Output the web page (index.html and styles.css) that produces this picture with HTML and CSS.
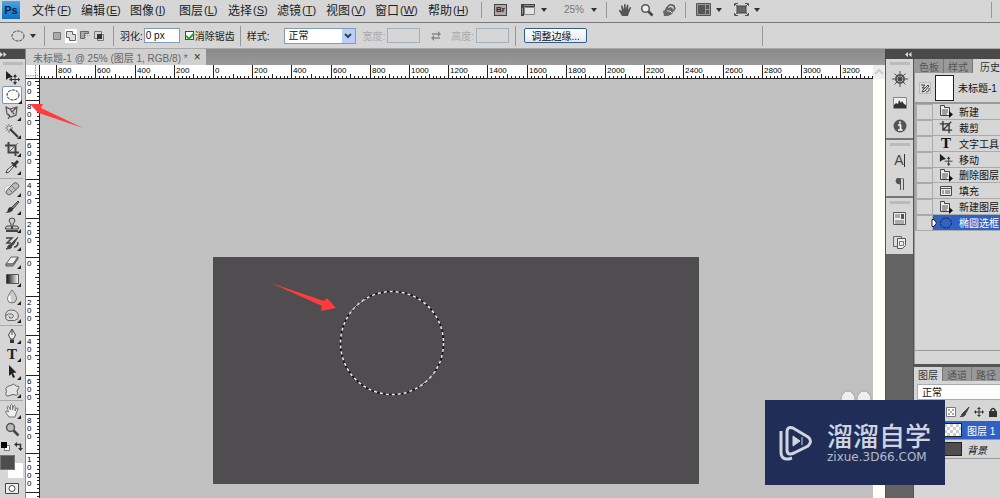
FILE: index.html
```html
<!DOCTYPE html>
<html lang="zh-CN">
<head>
<meta charset="utf-8">
<title>未标题-1 @ 25%</title>
<link rel="stylesheet" href="styles.css">
</head>
<body>
<div class="app">
  <header class="menubar">
    <span class="logo">Ps</span>
    <nav class="menus">
      <button>文件<i>(<u>F</u>)</i></button><button>编辑<i>(<u>E</u>)</i></button><button>图像<i>(<u>I</u>)</i></button><button>图层<i>(<u>L</u>)</i></button><button>选择<i>(<u>S</u>)</i></button><button>滤镜<i>(<u>T</u>)</i></button><button>视图<i>(<u>V</u>)</i></button><button class="wide">窗口<i>(<u>W</u>)</i></button><button class="wide">帮助<i>(<u>H</u>)</i></button>
    </nav>
    <span class="bar-sep"></span>
    <div class="apptools">
      <button class="bridge" aria-label="Bridge">Br</button>
      <button class="drop" aria-label="查看额外内容"><svg width="16" height="13" viewBox="0 0 16 13"><path d="M1 1h14v3H4v9H1z" fill="#444"/><path d="M4.500 4.500h10v7h-10z" fill="#e4e4e4" stroke="#888"/><path d="M2 6h1M2 8h1M2 10h1M5 2v1M7 2v1M9 2v1M11 2v1M13 2v1" stroke="#ddd"/></svg><b class="tri"></b></button>
      <button class="drop zoomlevel">25%<b class="tri"></b></button>
    </div>
    <span class="bar-sep"></span>
    <div class="viewtools">
      <button aria-label="抓手"><svg width="14" height="14" viewBox="0 0 14 14"><path d="M4 13 1 8q0-2 2-.5l1 1L3 3q.8-1.500 1.600 0L6 6.500V1.500q.8-1.500 1.600 0V6L9 2q1-1 1.500.3L10 7l2-3q1.500-.3 1 1l-2.500 6-.5 2z" fill="#555"/></svg></button>
      <button aria-label="缩放"><svg width="14" height="14" viewBox="0 0 14 14"><circle cx="5.500" cy="5.500" r="3.800" fill="#eee" stroke="#555" stroke-width="1.500"/><path d="m8.500 8.500 4 4" stroke="#444" stroke-width="2.500"/></svg></button>
      <button aria-label="旋转视图"><svg width="15" height="14" viewBox="0 0 15 14"><path d="M2 13 1 8l2-1 1-3 2 1 3-1 3 3-2 4-4 2z" fill="#666"/><path d="M5 5q2-5 7-2l1 3" fill="none" stroke="#555" stroke-width="1.500"/><path d="m10 6 4-1-2 4z" fill="#777"/><path d="M5 8h3l2 2" stroke="#ddd" fill="none"/></svg></button>
    </div>
    <span class="bar-sep"></span>
    <div class="arrange">
      <button class="drop" aria-label="排列文档"><svg width="15" height="13" viewBox="0 0 15 13"><path d="M.500.500h14v12H.500z" fill="#999" stroke="#555"/><path d="M2 2h7v9H2z" fill="#555"/><path d="M10 2h3v4h-3zM10 7h3v4h-3z" fill="#555"/></svg><b class="tri"></b></button>
      <button class="drop" aria-label="屏幕模式"><svg width="15" height="13" viewBox="0 0 15 13"><path d="M3 3h9v7H3z" fill="#666" stroke="#444"/><path d="M.500 3V.500H4M11 .500h3.500V3M.500 10v2.500H4M11 12.500h3.500V10M1 1l2 2M14 1l-2 2M1 12l2-2M14 12l-2-2" fill="none" stroke="#555"/></svg><b class="tri"></b></button>
    </div>
    <span class="bar-sep last"></span>
  </header>

  <section class="options">
    <button class="drop current" aria-label="椭圆选框工具"><svg width="14" height="12" viewBox="0 0 14 12"><ellipse cx="7" cy="6" rx="6" ry="5" fill="none" stroke="#444" stroke-dasharray="3 1"/></svg><b class="tri"></b></button>
    <span class="opt-sep"></span>
    <div class="modes">
      <button aria-label="新选区"><svg width="12" height="12" viewBox="0 0 12 12"><path d="M2.500 2.500h7v7h-7z" fill="#aaa" stroke="#777"/></svg></button>
      <button class="on" aria-label="添加到选区"><svg width="12" height="12" viewBox="0 0 12 12"><path d="M1.500 1.500h6v3h3v6h-6v-3h-3z" fill="#ddd" stroke="#666"/></svg></button>
      <button aria-label="从选区减去"><svg width="12" height="12" viewBox="0 0 12 12"><path d="M1.500 1.500h8v2h-4v5h-4z" fill="#aaa" stroke="#666"/><path d="M6 5.500h5M6.500 5v6" stroke="#aaa" stroke-dasharray="1 1"/></svg></button>
      <button aria-label="与选区交叉"><svg width="12" height="12" viewBox="0 0 12 12"><path d="M1.500 1.500h7v7h-7zM4.500 4.500h6v6h-6z" fill="none" stroke="#777"/><path d="M4 4h5v5H4z" fill="#333"/></svg></button>
    </div>
    <span class="opt-sep"></span>
    <label class="feather">羽化:<input type="text" value="0 px"></label>
    <label class="anti"><input type="checkbox" checked><span>消除锯齿</span></label>
    <span class="opt-sep"></span>
    <label class="style">样式:<select><option>正常</option></select></label>
    <label class="dim off">宽度:<input type="text" disabled></label>
    <svg class="swap" width="10" height="10" viewBox="0 0 10 10"><path d="M1 3h7M9 7H2" stroke="#888" stroke-width="1.500"/><path d="m7 0 3 3-3 3zM3 4 0 7l3 3z" fill="#888"/></svg>
    <label class="dim off">高度:<input type="text" disabled></label>
    <span class="opt-sep"></span>
    <button class="refine">调整边缘...</button>
    <span class="opt-sep end"></span>
  </section>

  <main class="work">
    <aside class="toolbox">
      <div class="dark-head"><svg width="7" height="5" viewBox="0 0 7 5"><path d="m0 0 3 2.500L0 5zM3.500 0l3 2.500-3 2.500z" fill="#ddd"/></svg></div>
      <div class="grip"></div>
      <button class="tool solo" aria-label="移动"><svg width="16" height="16" viewBox="0 0 16 16"><path d="M2 2v9l2.500-2L9 8z" fill="#222"/><path d="M11 6v9M6.500 10.500h9" stroke="#333"/><path d="m9 8 2-3 2 3zM9 13l2 3 2-3zM8 8.500v4l-3-2zM14 8.500v4l2-2z" fill="#333"/></svg></button>
      <button class="tool active" aria-label="椭圆选框"><svg width="16" height="16" viewBox="0 0 16 16"><ellipse cx="8" cy="8" rx="6" ry="5" fill="none" stroke="#222" stroke-dasharray="3 1"/></svg></button>
      <button class="tool" aria-label="套索"><svg width="16" height="16" viewBox="0 0 16 16"><path d="m2 2 4 2 7-2-1 8-5 2-4-3zM6 4l2 3 4-4M4 9q3 1 0 5" fill="none" stroke="#555" stroke-width="1.200"/><path d="m8 6 3 3-2 .5z" fill="#555"/></svg></button>
      <button class="tool" aria-label="魔棒"><svg width="16" height="16" viewBox="0 0 16 16"><path d="m6 6 8 8" stroke="#333" stroke-width="2"/><path d="M5 1v3M5 7v3M1 5h3M7 5h2M2 2l2 2M8 2 6 4M2 8l2-2" stroke="#777"/></svg></button>
      <button class="tool" aria-label="裁剪"><svg width="16" height="16" viewBox="0 0 16 16"><path d="M1 4.500h10.500V15M4.500 1v10.500H15" fill="none" stroke="#444" stroke-width="2"/><path d="m5 11 9-9" stroke="#666"/></svg></button>
      <button class="tool" aria-label="吸管"><svg width="16" height="16" viewBox="0 0 16 16"><path d="m2 14 1-3 6-5 1 1-5 6z" fill="#eee" stroke="#444"/><path d="m7 4 5 5 1-1-1-2 3-3-2-2-3 3-2-1z" fill="#333"/></svg></button>
      <hr>
      <button class="tool" aria-label="修复画笔"><svg width="16" height="16" viewBox="0 0 16 16"><circle cx="5" cy="9" r="4.500" fill="#eee" stroke="#aaa" stroke-dasharray="1 1"/><path d="M3 13q-2-2 0-4l7-7q2-1 4 1t0 4l-7 6q-2 2-4 0z" fill="#bbb" stroke="#666"/><path d="m5 8 4 4M8 5l4 4" stroke="#777"/></svg></button>
      <button class="tool" aria-label="画笔"><svg width="16" height="16" viewBox="0 0 16 16"><path d="m14 2-7 7 2 1 6-7z" fill="#888" stroke="#444"/><path d="M7 8q2 1 2 3-2 3-8 3 3-1 3-4 1-2 3-2z" fill="#333"/></svg></button>
      <button class="tool" aria-label="仿制图章"><svg width="16" height="16" viewBox="0 0 16 16"><path d="M8 1q3 0 3 3L9 7v2h4q1.500 0 1.500 3h-13Q1.500 9 3 9h4V7L5 4q0-3 3-3z" fill="#ccc" stroke="#444"/><path d="M2 14h12M8 9v3" stroke="#444" stroke-width="2"/></svg></button>
      <button class="tool" aria-label="历史画笔"><svg width="16" height="16" viewBox="0 0 16 16"><path d="m14 2-7 7 2 1zM7 9q2 1 0 4-2 1-5 1 2-1 2-3z" fill="#444" stroke="#444"/><path d="M2 3h6L3 8h4M10 12q4 0 4-5" fill="none" stroke="#444" stroke-width="1.500"/></svg></button>
      <button class="tool" aria-label="橡皮擦"><svg width="16" height="16" viewBox="0 0 16 16"><path d="m2 11 5-7h7l-5 7z" fill="#eee" stroke="#666"/><path d="M2 11v2h7l5-7V4l-5 7z" fill="#aaa" stroke="#555"/></svg></button>
      <button class="tool" aria-label="渐变"><svg width="16" height="16" viewBox="0 0 16 16"><defs><linearGradient id="g"><stop stop-color="#111"/><stop offset="1" stop-color="#fff"/></linearGradient></defs><path d="M2.500 3.500h12v9h-12z" fill="url(#g)" stroke="#555"/></svg></button>
      <button class="tool" aria-label="模糊"><svg width="16" height="16" viewBox="0 0 16 16"><path d="M8 1q5 6 4.500 9-.5 4-4.500 4T3.500 10Q3.500 7 8 1z" fill="#ccc" stroke="#777"/><path d="M6 7q-2 4 1 5" stroke="#fff" stroke-width="2" fill="none"/></svg></button>
      <button class="tool" aria-label="海绵"><svg width="16" height="16" viewBox="0 0 16 16"><path d="M1.500 9q0-6 6-6t7 6q0 4-4 4.500H4Q1.500 13 1.500 9z" fill="#ddd" stroke="#666"/><path d="M1.500 9Q4 6 8 7q3 2 0 4-3 1-3-2" fill="none" stroke="#666"/></svg></button>
      <hr class="thin">
      <button class="tool" aria-label="钢笔"><svg width="16" height="16" viewBox="0 0 16 16"><path d="m8 1 3.500 6L9.500 11h-3L4.500 7z" fill="#eee" stroke="#444"/><path d="M8 2v5" stroke="#444"/><path d="M6 11.500h4V15H6z" fill="#333"/></svg></button>
      <button class="tool type" aria-label="文字">T</button>
      <button class="tool" aria-label="路径选择"><svg width="16" height="16" viewBox="0 0 16 16"><path d="M5 1v11l2.500-2 1.500 4 2-1-2-4 3.500-.5z" fill="#222"/></svg></button>
      <button class="tool" aria-label="自定形状"><svg width="16" height="16" viewBox="0 0 16 16"><path d="M8 3q2-2 3 0t3 1q2 1 0 3t0 5q-1 2-3 1t-4 0-4 1q-2-1-1-3T2 8q-1-2 1-3t2-1 3-1z" fill="#e4e4e4" stroke="#666"/></svg></button>
      <hr class="thin">
      <button class="tool" aria-label="抓手"><svg width="16" height="16" viewBox="0 0 16 16"><path d="M5 14 1.500 9q0-2 2-.5L4.500 9 3 4q.8-1.500 2 0l1.500 3V2q1-1.500 2 0v5l1-4q1-1.500 1.800.2L11 8l1.500-3q1.800-.6 1.500 1l-2 5-1 3z" fill="#eee" stroke="#777"/></svg></button>
      <button class="tool solo" aria-label="缩放"><svg width="16" height="16" viewBox="0 0 16 16"><circle cx="6.500" cy="6.500" r="4" fill="#bbb" stroke="#555" stroke-width="1.500"/><path d="m9.500 9.500 5 5" stroke="#444" stroke-width="2.500"/></svg></button>
      <div class="mini"><svg width="9" height="9" viewBox="0 0 9 9"><path d="M3.500 3.500h5v5h-5z" fill="#fff" stroke="#777"/><path d="M0 0h6v6H0z" fill="#000"/></svg><svg width="9" height="9" viewBox="0 0 9 9"><path d="M2 2.500h4.500V7" fill="none" stroke="#333" stroke-width="1.500"/><path d="M3 0v5L0 2.500zM4 6h5L6.500 9z" fill="#333"/></svg></div>
      <div class="swatches"><span class="bg"></span><span class="fg"></span></div>
      <button class="quick" aria-label="快速蒙版"><svg width="14" height="11" viewBox="0 0 14 11"><path d="M.500.500h13v10H.500z" fill="#eee" stroke="#444"/><circle cx="7" cy="5.500" r="3" fill="#fff" stroke="#444"/></svg></button>
    </aside>

    <section class="document">
      <div class="tabs"><div class="tab">未标题-1 @ 25% (图层 1, RGB/8) *<button aria-label="关闭">×</button></div></div>
      <div class="view">
        <svg class="corner" width="14" height="15" viewBox="0 0 14 15"><path d="M0 12.500h14M10.500 0v15" stroke="#555" stroke-dasharray="1 1"/></svg>
        <svg class="hruler" id="hruler"></svg>
        <button class="scroll-up" aria-label="向上滚动"><svg width="10" height="8" viewBox="0 0 10 8"><path d="m1 6 4-4 4 4" fill="none" stroke="#ccc" stroke-width="2"/></svg></button>
        <svg class="vruler" id="vruler"></svg>
        <div class="canvas">
          <div class="artboard"><svg class="selection" width="106" height="106" viewBox="0 0 106 106"><circle cx="53" cy="53" r="51.500" fill="none" stroke="#111" stroke-width="1.500"/><circle cx="53" cy="53" r="51.500" fill="none" stroke="#eee" stroke-width="1.500" stroke-dasharray="3 3"/><path d="M10 24Q16 15 27 9M80 97Q90 90 97 81" fill="none" stroke="#bbb"/></svg></div>
          <svg class="puffs" width="32" height="20" viewBox="0 0 32 20"><ellipse cx="8" cy="10" rx="7" ry="9" fill="#eee" stroke="#aaa"/><ellipse cx="24" cy="10" rx="7" ry="9" fill="#eee" stroke="#aaa"/></svg>
        </div>
        <div class="scrollbar"></div>
        <svg class="arrow one" width="53" height="25" viewBox="0 0 53 25"><path d="M0 0 13 0 11 4 53 24 9 9 11 12z" fill="#ff3b3b"/></svg>
        <svg class="arrow two" width="66" height="29" viewBox="0 0 66 29"><path d="m0 0 53 18 3-3 9 10-15 3 1-5z" fill="#ff3b3b"/></svg>
      </div>
    </section>

    <aside class="right">
      <div class="dark-head"><svg width="7" height="5" viewBox="0 0 7 5"><path d="M3 0 0 2.500 3 5zM6.500 0l-3 2.500 3 2.500z" fill="#ddd"/></svg></div>
      <div class="columns">
        <div class="dock">
          <div class="group"><i class="grip"></i>
            <button aria-label="导航器"><svg width="16" height="16" viewBox="0 0 16 16"><circle cx="8" cy="8" r="4" fill="none" stroke="#555" stroke-width="2"/><path d="M8 0v16M0 8h16M2.500 2.500l11 11M13.500 2.500l-11 11" stroke="#555"/><circle cx="8" cy="8" r="2" fill="#444"/></svg></button>
            <button aria-label="直方图"><svg width="14" height="12" viewBox="0 0 14 12"><path d="M.500.500h13v11H.500z" fill="#eee" stroke="#888"/><path d="M1 11V8l2-2 2 1 1-4 2 3 1-2 2 3 2 1v3z" fill="#333"/></svg></button>
            <button aria-label="信息"><svg width="14" height="14" viewBox="0 0 14 14"><circle cx="7" cy="7" r="6.500" fill="#555"/><path d="M7 2.500v2M5 6h2.500v5M5 11h4.500" stroke="#fff" stroke-width="1.700" fill="none"/></svg></button>
          </div>
          <div class="group two"><i class="grip"></i>
            <button class="char" aria-label="字符">A<b></b></button>
            <button class="para" aria-label="段落"><svg width="10" height="12" viewBox="0 0 10 12"><path d="M9 0H4Q1 0 1 3t4 3V0M5.500 1v11M8.500 1v11" fill="#555" stroke="#555" stroke-width="1"/></svg></button>
          </div>
          <div class="group three"><i class="grip"></i>
            <button aria-label="图层复合"><svg width="13" height="13" viewBox="0 0 13 13"><path d="M.500.500h12v12H.500z" fill="#eee" stroke="#555"/><path d="M2 3h5M2 5h5M2 9h9M2 11h9" stroke="#666"/><path d="M8 2h3v5H8z" fill="#555"/></svg></button>
            <button aria-label="仿制源"><svg width="15" height="15" viewBox="0 0 15 15"><path d="M1.500 1.500h8v10h-8z" fill="#ddd" stroke="#666"/><path d="M5.500 3.500h8v7l-3 3h-5z" fill="#eee" stroke="#555"/><path d="M7.500 6.500h4v4h-4z" fill="none" stroke="#777"/></svg></button>
          </div>
        </div>
        <div class="panels">
          <section class="history">
            <div class="ptabs"><button>色板</button><button>样式</button><button class="sel">历史记录</button></div>
            <div class="snapshot"><svg width="12" height="12" viewBox="0 0 12 12"><path d="M.500.500h11v11H.500z" fill="#ddd" stroke="#bbb"/><path d="m4 8 5-5 1 1-4 5-3 1zM2 3h4L3 6h3M7 10q4 0 3-4" fill="none" stroke="#444"/></svg><span class="thumb"></span><span>未标题-1</span></div>
            <ol class="states">
              <li><i></i><svg><use href="#doc"/></svg>新建</li>
              <li><i></i><svg viewBox="0 0 16 16"><path d="M1 4.500h10.500V15M4.500 1v10.500H15M5 11l9-9" fill="none" stroke="#333" stroke-width="1.500"/></svg>裁剪</li>
              <li><i></i><b class="t">T</b>文字工具</li>
              <li><i></i><svg viewBox="0 0 16 16"><path d="M1 2v9l3-2 4-1z" fill="#222"/><path d="M11 6v9M6.500 10.500h9" stroke="#333"/><path d="m9 8 2-3 2 3zM9 13l2 3 2-3z" fill="#333"/></svg>移动</li>
              <li><i></i><svg><use href="#doc"/></svg>删除图层</li>
              <li><i></i><svg viewBox="0 0 14 14"><path d="M1.500 2.500h11v9h-11z" fill="#eee" stroke="#444"/><path d="M2 4.500h10M3 7h2M6 7h5M3 9h2M6 9h5" stroke="#555"/></svg>填充</li>
              <li><i></i><svg><use href="#doc"/></svg>新建图层</li>
              <li class="cur"><i></i><svg viewBox="0 0 14 14"><ellipse cx="7" cy="7" rx="5.500" ry="5" fill="none" stroke="#123" stroke-dasharray="3 1"/></svg>椭圆选框<svg class="marker" viewBox="0 0 6 8"><path d="M1 .500h2L5.500 4 3 7.500H1z" fill="#fff" stroke="#222"/></svg></li>
            </ol>
            <div class="foot"></div>
          </section>
          <section class="layers">
            <div class="ptabs"><button class="sel">图层</button><button>通道</button><button>路径</button></div>
            <select class="blend" aria-label="混合模式"><option>正常</option></select>
            <div class="locks">
              <svg width="10" height="10" viewBox="0 0 10 10"><path d="M.500.500h9v9h-9z" fill="#fff" stroke="#777"/><path d="M2 2h2v2H2zM6 2h2v2H6zM4 4h2v2H4zM2 6h2v2H2zM6 6h2v2H6z" fill="#aaa"/></svg>
              <svg width="10" height="10" viewBox="0 0 10 10"><path d="m9 0-5 5 2 1zM4 5l2 2q-2 3-6 3 2-1 2-3z" fill="#444" stroke="#444"/></svg>
              <svg width="10" height="10" viewBox="0 0 10 10"><path d="M5 1v8M1 5h8" stroke="#333"/><path d="m3 2 2-2 2 2zM3 8l2 2 2-2zM2 3 0 5l2 2zM8 3l2 2-2 2z" fill="#333"/></svg>
              <svg width="10" height="10" viewBox="0 0 10 10"><path d="M3 5V3q2-3 4 0v2" fill="none" stroke="#333" stroke-width="1.500"/><path d="M1 4h8v6H1z" fill="#333"/></svg>
            </div>
            <div class="layer cur"><span class="lthumb check"></span>图层 1</div>
            <div class="layer"><span class="lthumb"></span><em>背景</em></div>
          </section>
        </div>
      </div>
    </aside>
  </main>

  <div class="badge">
    <svg width="34" height="36" viewBox="0 0 34 36"><path d="M2 6v21q0 8 8 7l3-1M8 7q0-6 6-4l15 9q5 4 0 9L15 28q-7 3-7-3z" fill="none" stroke="#d0d4e0" stroke-width="3"/><path d="m14 11 7 5-7 5zM23 12v8" fill="#d0d4e0" stroke="#d0d4e0"/></svg>
    <div><strong>溜溜自学</strong><span>zixue.3D66.COM</span></div>
  </div>
</div>
<svg class="defs" width="0" height="0"><symbol id="doc" viewBox="0 0 14 14"><path d="M1.500 3.500v-2h4v2h5v8h-9z" fill="#eee" stroke="#444"/><path d="M3 6h6M3 8h6M3 10h5" stroke="#555"/><path d="m10 7 4 3.500-4 3.500z" fill="#111"/></symbol></svg>
<script src="rulers.js"></script>
</body>
</html>
```
FILE: styles.css
```css
* { box-sizing: border-box; }
body { margin: 0; font: 12px "Liberation Sans", "Noto Sans CJK SC", sans-serif; color: #222; overflow: hidden; }
button { border: 0; padding: 0; margin: 0; background: none; font: inherit; color: inherit; display: flex; align-items: center; white-space: nowrap; }
input, select { font: inherit; color: #111; margin: 0; border-radius: 0; }
svg { flex: none; display: block; }
.defs { position: absolute; }
.app { height: 100vh; display: flex; flex-direction: column; background: #d6d6d6; position: relative; }

.menubar { height: 23px; flex: none; display: flex; align-items: center; border-bottom: 1px solid #777; padding-bottom: 3px; }
.logo { width: 18px; height: 18px; margin: 0 12px 0 2px; background: linear-gradient(#45a9e8, #0f6fc0); color: #06213f; font-weight: bold; font-size: 11px; line-height: 18px; text-align: center; }
.menus { display: flex; }
.menus button { width: 49px; }
.menus button.wide { width: 53px; }
.menus i { font-style: normal; font-size: 11px; padding-left: 1px; }
.bar-sep { width: 1px; height: 16px; background: #999; }
.bar-sep.last { margin-left: auto; margin-right: 8px; }
.apptools { display: flex; align-items: center; gap: 13px; padding: 0 9px 0 12px; }
.bridge { width: 13px; height: 12px; border: 1px solid #444; background: #aaa; font-size: 8px; font-weight: bold; justify-content: center; }
.drop { gap: 5px; }
.tri { border: 3px solid transparent; border-top: 4px solid #333; border-bottom: 0; }
.zoomlevel { color: #777; font-size: 10px; gap: 7px; padding-left: 4px; }
.viewtools { display: flex; gap: 8px; padding: 0 8px 0 11px; }
.arrange { display: flex; gap: 12px; padding-left: 10px; }

.options { height: 26px; flex: none; display: flex; align-items: center; font-size: 10px; padding-left: 11px; border-bottom: 1px solid #aaa; white-space: nowrap; }
.opt-sep { width: 1px; height: 20px; background: #999; }
.current { gap: 5px; padding-right: 8px; }
.modes { display: flex; gap: 2px; padding: 0 8px 0 6px; }
.modes .on { background: #fff; }
.modes button { height: 14px; }
.feather { display: flex; align-items: center; gap: 1px; padding-left: 6px; }
.feather input { width: 36px; height: 15px; border: 1px solid #7f9db9; background: #fff; padding: 0 1px; }
.anti { display: flex; align-items: center; gap: 1px; padding: 0 5px; }
.anti input { appearance: none; width: 9px; height: 9px; border: 1px solid #1c5180; background: #fff; display: grid; place-items: center; }
.anti input:checked::before { content: ""; width: 6px; height: 3px; border: 2px solid #21a121; border-width: 0 0 2px 2px; transform: rotate(-45deg); }
.style { display: flex; align-items: center; gap: 14px; padding-left: 6px; }
.style select { appearance: none; width: 72px; height: 16px; border: 1px solid #7f9db9; padding: 0 4px; background: url("data:image/svg+xml,%3Csvg xmlns='http://www.w3.org/2000/svg' width='13' height='14'%3E%3Cpath d='M0 0h13v14H0z' fill='%23bccff8'/%3E%3Cpath d='m3 5 3 3 3-3' fill='none' stroke='%23345' stroke-width='2'/%3E%3C/svg%3E") right center no-repeat #fff; }
.dim { display: flex; align-items: center; gap: 2px; padding-left: 7px; color: #aaa; }
.dim input { width: 33px; height: 15px; border: 1px solid #a3b0bd; background: #d6d6d6; }
.swap { margin: 0 3px 0 11px; }
.dim + .opt-sep { margin-left: 6px; }
.refine { width: 63px; height: 15px; margin-left: 8px; justify-content: center; border: 1px solid #315f8b; border-radius: 2px; background: linear-gradient(#fff, #e6e8ee); color: #111; }
.opt-sep.end { margin-left: 175px; }

.work { flex: 1; min-height: 0; display: flex; }
.dark-head { height: 10px; flex: none; background: #4a4a4a; display: flex; align-items: center; }
.toolbox { width: 26px; flex: none; display: flex; flex-direction: column; border-right: 1px solid #888; }
.grip { height: 9px; flex: none; display: block; background: linear-gradient(#bbb, #bbb) center 3px / 20px 3px no-repeat; }
.tool { width: 25px; height: 18px; flex: none; padding-left: 4px; position: relative; }
.tool::after { content: ""; position: absolute; right: 4px; bottom: 1px; border: 2px solid #222; border-top-color: transparent; border-left-color: transparent; }
.tool.solo::after { display: none; }
.tool.active { width: 20px; margin-left: 2px; padding-left: 2px; border: 1px solid #7d95b5; border-radius: 2px; background: #fff; }
.tool.active::after { right: -1px; bottom: -1px; }
.tool.type { font: bold 15px "Liberation Serif", serif; padding-left: 7px; }
.toolbox hr { width: 23px; height: 1px; margin: 2px 0 1px; border: 0; background: #aaa; flex: none; }
.toolbox hr.thin { margin: 1px 0; }
.mini { height: 16px; flex: none; display: flex; gap: 4px; align-items: center; padding-left: 1px; }
.swatches { flex: none; display: grid; grid-template: 8px 7px 8px / 8px 7px 8px; margin: 1px 0 5px; }
.fg { grid-area: 1 / 1 / 3 / 3; background: #4e4c4f; border: 1px solid #777; }
.bg { grid-area: 2 / 2 / 4 / 4; background: #fff; }
.quick { margin-left: 5px; }

.document { flex: 1; min-width: 0; display: flex; flex-direction: column; }
.tabs { height: 16px; flex: none; background: linear-gradient(#8a8a8a, #999); display: flex; }
.tab { background: #d0d0d0; color: #666; font-size: 10px; display: flex; align-items: center; gap: 6px; padding: 0 5px 0 7px; white-space: nowrap; }
.tab button { font-size: 12px; color: #333; }
.view { flex: 1; min-height: 0; display: grid; grid-template: 14px minmax(0, 1fr) / 14px minmax(0, 1fr) 12px; position: relative; }
.corner, .hruler, .vruler { width: 100%; height: 100%; background: #fff; overflow: hidden; }
.corner { border-bottom: 1px solid #222; border-right: 1px solid #222; }
.hruler, .vruler { font: 8px "Liberation Sans", sans-serif; }
.hruler path, .vruler path { stroke: #222; fill: none; shape-rendering: crispEdges; }
.scroll-up { background: #eee; justify-content: center; }
.scrollbar { background: #fffff6; }
.canvas { background: #c0c0c0; position: relative; overflow: hidden; }
.artboard { position: absolute; left: 173px; top: 178px; width: 486px; height: 227px; background: #4f4d50; }
.selection { position: absolute; left: 126px; top: 33px; }
.puffs { position: absolute; right: 1px; top: 311px; }
.arrow { position: absolute; }
.arrow.one { left: 4px; top: 39px; }
.arrow.two { left: 245px; top: 218px; }

.right { width: 115px; flex: none; display: flex; flex-direction: column; }
.right > .dark-head { padding-left: 20px; }
.columns { flex: 1; min-height: 0; display: flex; }
.dock { width: 29px; flex: none; background: #636363; border: 1px solid #555; border-width: 0 1px; }
.group { background: #d6d6d6; display: flex; flex-direction: column; align-items: center; height: 81px; border-bottom: 2px solid #777; }
.group .grip { width: 100%; height: 8px; }
.group button { height: 24px; }
.group.two { height: 58px; }
.group.three { height: 56px; border: 0; }
.group.two .grip, .group.three .grip { height: 8px; }
.char { font-size: 14px; color: #444; }
.char b { width: 1px; height: 13px; background: #333; }
.panels { flex: 1; min-width: 0; display: flex; flex-direction: column; font-size: 11px; overflow: hidden; white-space: nowrap; }
.ptabs { height: 14px; flex: none; display: flex; background: #888; }
.ptabs button { flex: none; padding: 0 4px; color: #555; background: #999; border-right: 1px solid #777; font-size: 10px; width: 29px; }
.ptabs .sel { background: #d6d6d6; color: #333; }
.history .ptabs .sel { width: 50px; padding-left: 7px; }
.history { height: 305px; flex: none; display: flex; flex-direction: column; border-left: 1px solid #999; }
.snapshot { height: 31px; flex: none; display: flex; align-items: center; gap: 4px; padding-left: 4px; border-bottom: 2px solid #999; color: #111; font-size: 10px; }
.thumb { width: 19px; height: 26px; border: 1px solid #222; background: #fff; }
.states { flex: none; height: 127px; margin: 0; padding: 0; list-style: none; display: grid; grid-template-rows: repeat(8, 1fr); font-size: 10px; color: #111; }
.states li { display: flex; align-items: center; border-bottom: 1px solid #aaa; min-height: 0; position: relative; }
.states i { width: 18px; flex: none; align-self: stretch; border: 1px solid #aaa; border-width: 1px 1px 0 2px; }
.states svg, .states .t { width: 14px; height: 14px; margin: 0 6px 0 6px; flex: none; }
.states .t { font: bold 15px/14px "Liberation Serif", serif; text-align: center; }
.states .cur { background: linear-gradient(#2f62c4, #2f62c4) 18px 0 no-repeat; color: #fff; }
.states .marker { position: absolute; left: 16px; width: 6px; height: 8px; margin: 0; }
.foot { margin-top: auto; height: 14px; border-top: 1px solid #999; }
.layers { flex: 1; border-top: 3px solid #555; display: flex; flex-direction: column; align-items: stretch; }
.blend { appearance: none; height: 16px; margin: 3px 0 3px 3px; padding: 0 4px; border: 1px solid #a5acb5; border-right: 0; background: #fff; font-size: 10px; flex: none; }
.locks { height: 18px; display: flex; align-items: center; gap: 4px; padding-left: 32px; }
.layer { height: 19px; display: flex; align-items: center; gap: 5px; padding-left: 20px; border-bottom: 1px solid #999; font-size: 10px; color: #111; }
.layer.cur { background: #2f62c4; color: #fff; }
.lthumb { width: 28px; height: 14px; border: 1px solid #222; background: #4f4d50; }
.check { background: repeating-conic-gradient(#ccc 0 25%, #fff 0 50%) 0 0 / 6px 6px; }

.badge { position: absolute; left: 765px; top: 400px; width: 180px; height: 85px; background: #202e57; color: #d0d4e0; display: flex; align-items: center; gap: 14px; padding-left: 14px; }
.badge strong { display: block; font: 500 26px/28px "Noto Sans CJK SC", sans-serif; }
.badge span { display: block; font: 12px/16px "DejaVu Sans", sans-serif; color: #b4bacb; }
```
FILE: rulers.js
```javascript
const NS = 'http://www.w3.org/2000/svg';
const STEP = 39.2;

function label(svg, x, y, text) {
  const t = document.createElementNS(NS, 'text');
  t.setAttribute('x', x);
  t.setAttribute('y', y);
  t.textContent = text;
  svg.append(t);
}

function ruler(id, origin, from, to, vertical) {
  const svg = document.getElementById(id);
  const room = svg.getBoundingClientRect();
  let d = vertical ? 'M13.5 0V2000' : 'M0 13.5H4000';
  for (let n = from; n <= to; n++) {
    const base = origin + n * STEP;
    for (let k = 0; k < 10; k++) {
      const p = Math.round(base + k * STEP / 10) + 0.5;
      const len = k === 0 ? 14 : k === 5 ? 5 : 3;
      d += vertical ? `M${14 - len} ${p}H14` : `M${p} ${14 - len}V14`;
    }
    const text = String(Math.abs(n) * 200);
    const at = Math.round(base);
    if (vertical) {
      [...text].forEach((c, i) => {
        const y = at + 9 + i * 8;
        if (y > 6 && y < room.height) label(svg, 1, y, c);
      });
    } else if (at >= 0) {
      label(svg, at + 2, 8, text);
    }
  }
  const path = document.createElementNS(NS, 'path');
  path.setAttribute('d', d);
  svg.append(path);
}

ruler('hruler', 173, -5, 16, false);
ruler('vruler', 178, -5, 6, true);
```
